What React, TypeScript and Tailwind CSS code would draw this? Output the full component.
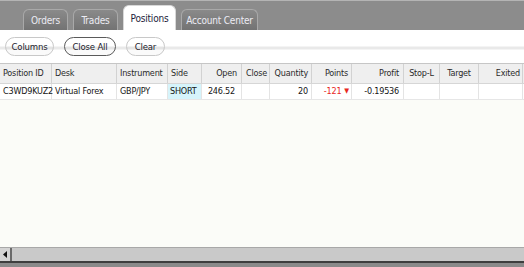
import React from 'react';

const tabs = [
  { label: 'Orders', width: 'w-[45px]', active: false },
  { label: 'Trades', width: 'w-[45px]', active: false },
  { label: 'Positions', width: 'w-[53px]', active: true },
  { label: 'Account Center', width: 'w-[77px]', active: false },
];

const columns = [
  { label: 'Position ID', width: 'w-[52px]', align: 'justify-start pl-[3px]' },
  { label: 'Desk', width: 'w-[65px]', align: 'justify-start pl-[3px]' },
  { label: 'Instrument', width: 'w-[51px]', align: 'justify-start pl-[3px]' },
  { label: 'Side', width: 'w-[34px]', align: 'justify-start pl-[3px]' },
  { label: 'Open', width: 'w-[40px]', align: 'justify-end pr-[4px]' },
  { label: 'Close', width: 'w-[28px]', align: 'justify-end pr-[2px]' },
  { label: 'Quantity', width: 'w-[42px]', align: 'justify-end pr-[3px]' },
  { label: 'Points', width: 'w-[40px]', align: 'justify-end pr-[3px]' },
  { label: 'Profit', width: 'w-[52px]', align: 'justify-end pr-[4px]' },
  { label: 'Stop-L', width: 'w-[36px]', align: 'justify-center' },
  { label: 'Target', width: 'w-[39px]', align: 'justify-center' },
  { label: 'Exited', width: 'w-[44px]', align: 'justify-end pr-[2px]' },
];

function Tab({ label, width, active }: { label: string; width: string; active: boolean }) {
  if (active) {
    return (
      <div className={`${width} h-[25px] rounded-t-[6px] bg-white border border-b-0 border-[#d8d8d8] flex items-center justify-center pt-[2px] text-[#1c1c3a]`}>
        {label}
      </div>
    );
  }
  return (
    <div className={`${width} h-[21px] rounded-t-[6px] bg-[linear-gradient(to_bottom,#8a8a8a,#737373)] border border-b-0 border-[#a9a9a9] flex items-center justify-center pt-[2px] text-[#ececf4]`}>
      {label}
    </div>
  );
}

function PillButton({ label, width, focused }: { label: string; width: string; focused?: boolean }) {
  return (
    <button
      className={`${width} h-[19px] flex items-center justify-center rounded-[10px] border text-[#1c1c2c] bg-[linear-gradient(to_bottom,#ffffff_0,#ffffff_8px,#e4e4e4_9px,#e4e4e4_11px,#fafafa_12px)] ${
        focused ? 'border-[#5a5a5a]' : 'border-[#c8c8c8]'
      }`}
    >
      {label}
    </button>
  );
}

export default function App() {
  return (
    <div className="w-[524px] h-[267px] flex flex-col overflow-hidden whitespace-nowrap bg-[#fbfcf8] text-[9px] leading-none tracking-[-0.2px] font-['DejaVu_Sans_Condensed','DejaVu_Sans',sans-serif] font-stretch-condensed">
      {/* Tab strip */}
      <div className="h-[30px] flex-shrink-0 flex items-end gap-[5px] pl-[23px] bg-[#8c8c8c] border-t border-[#b4b4b4] text-[10px]">
        {tabs.map((t) => (
          <Tab key={t.label} {...t} />
        ))}
      </div>

      {/* Toolbar */}
      <div className="h-[34px] flex-shrink-0 flex items-center gap-[10px] px-[5px] border-b border-[#c6c6c6] bg-[linear-gradient(to_bottom,#ffffff_0,#ffffff_16px,#e9e9e9_17px,#e9e9e9_19px,#ffffff_20px)] text-[9.5px]">
        <PillButton label="Columns" width="w-[49px]" />
        <PillButton label="Close All" width="w-[52px]" focused />
        <PillButton label="Clear" width="w-[39px]" />
      </div>

      {/* Header */}
      <div className="h-[20px] flex-shrink-0 flex bg-[#efefef] border-b border-[#d6d6d6] text-[#2a2a2a]">
        {columns.map((c) => (
          <div key={c.label} className={`${c.width} flex-shrink-0 flex items-center ${c.align} border-r border-[#d2d2d2]`}>
            {c.label}
          </div>
        ))}
      </div>

      {/* Row */}
      <div className="h-[16px] flex-shrink-0 flex bg-white border-b border-[#e6e6e6] text-[#141414]">
        <div className="w-[52px] flex-shrink-0 flex items-center pl-[3px] border-r border-[#e4e4e4]">C3WD9KUZ2</div>
        <div className="w-[65px] flex-shrink-0 flex items-center pl-[3px] border-r border-[#e4e4e4]">Virtual Forex</div>
        <div className="w-[51px] flex-shrink-0 flex items-center pl-[3px] border-r border-[#e4e4e4]">GBP/JPY</div>
        <div className="w-[34px] flex-shrink-0 flex items-center pl-[2px] bg-[#d6f4fb] border-r border-[#e4e4e4]">SHORT</div>
        <div className="w-[40px] flex-shrink-0 flex items-center justify-end pr-[6px] border-r border-[#e4e4e4]">246.52</div>
        <div className="w-[28px] flex-shrink-0 border-r border-[#e4e4e4]" />
        <div className="w-[42px] flex-shrink-0 flex items-center justify-end pr-[3px] border-r border-[#e4e4e4]">20</div>
        <div className="w-[40px] flex-shrink-0 flex items-center justify-end gap-[3px] pr-[2px] text-[#e8281e] border-r border-[#e4e4e4]">
          -121
          <span className="text-[7px]">▼</span>
        </div>
        <div className="w-[52px] flex-shrink-0 flex items-center justify-end pr-[4px] border-r border-[#e4e4e4]">-0.19536</div>
        <div className="w-[36px] flex-shrink-0 border-r border-[#e4e4e4]" />
        <div className="w-[39px] flex-shrink-0 border-r border-[#e4e4e4]" />
        <div className="w-[44px] flex-shrink-0 border-r border-[#e4e4e4]" />
      </div>

      <div className="flex-1" />

      {/* Horizontal scrollbar */}
      <div className="h-[14px] flex-shrink-0 flex bg-[#c9c9c9] border-t border-[#a8a8a8]">
        <div className="w-[12px] flex items-center justify-center bg-[#d4d4d4] border-r-2 border-[#6a6a6a]">
          <svg width="4" height="7" viewBox="0 0 4 7">
            <path d="M4 0 L0 3.5 L4 7 Z" fill="#111" />
          </svg>
        </div>
        <div className="flex-1" />
      </div>

      {/* Bottom edge */}
      <div className="h-[6px] flex-shrink-0 bg-[#8a8a8a] border-t-2 border-[#3e3e3e]" />
    </div>
  );
}
